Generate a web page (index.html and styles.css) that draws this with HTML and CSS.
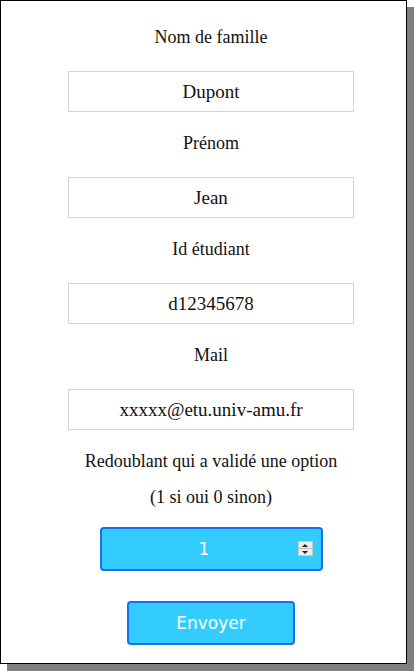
FILE: index.html
```html
<!DOCTYPE html>
<html lang="fr">
<head>
<meta charset="utf-8">
<title>Formulaire</title>
<link rel="stylesheet" href="styles.css">
</head>
<body>
<div class="page">
<div class="card">
  <form class="form">
    <label class="label" for="nom">Nom de famille</label>
    <input class="field" id="nom" type="text" value="Dupont">
    <label class="label" for="prenom">Prénom</label>
    <input class="field" id="prenom" type="text" value="Jean">
    <label class="label" for="id">Id étudiant</label>
    <input class="field" id="id" type="text" value="d12345678">
    <label class="label" for="mail">Mail</label>
    <input class="field" id="mail" type="text" value="xxxxx@etu.univ-amu.fr">
    <p class="label label-tight">Redoublant qui a validé une option</p>
    <p class="label label-sub">(1 si oui 0 sinon)</p>
    <div class="num-wrap">
      <input class="num" type="number" value="1">
      <span class="spin"><span class="spin-half"><span class="tri tri-up"></span></span><span class="spin-half"><span class="tri tri-down"></span></span></span>
    </div>
    <button class="btn" type="button">Envoyer</button>
  </form>
</div>
</div>
</body>
</html>
```
FILE: styles.css
```css
html, body {
  margin: 0;
  padding: 0;
  background: #ffffff;
}

.page {
  width: 414px;
  height: 671px;
  overflow: hidden;
}

.card {
  box-sizing: border-box;
  width: 407px;
  height: 664px;
  border: 1px solid #000000;
  background: #ffffff;
  box-shadow: 7px 7px 0 0 #808080;
}

.form {
  display: flex;
  flex-direction: column;
  align-items: center;
  padding: 25px 0 0 15px;
  margin: 0;
}

.label {
  display: block;
  margin: 0 0 23px;
  font-family: "Liberation Serif", "Times New Roman", serif;
  font-size: 18px;
  line-height: 22px;
  color: #111111;
  text-align: center;
}

.label-tight {
  margin-bottom: 14px;
}

.label-sub {
  margin-bottom: 19px;
}

.field {
  box-sizing: border-box;
  width: 286px;
  height: 41px;
  margin: 0 0 20px;
  padding: 0 4px;
  border: 1px solid #d4d4d4;
  background: #ffffff;
  font-family: "Liberation Serif", "Times New Roman", serif;
  font-size: 19px;
  color: #111111;
  text-align: center;
  outline: none;
}

.num-wrap {
  position: relative;
  width: 223px;
  height: 44px;
  margin: 0 0 30px;
}

.num {
  box-sizing: border-box;
  width: 100%;
  height: 100%;
  margin: 0;
  padding: 0 14px 0 0;
  border: 2px solid #1a6ff0;
  border-radius: 4px;
  background: #33ccff;
  font-family: "DejaVu Sans", Verdana, sans-serif;
  font-size: 17px;
  color: #ffffff;
  text-align: center;
  appearance: textfield;
  -moz-appearance: textfield;
  outline: none;
}

.num::-webkit-inner-spin-button,
.num::-webkit-outer-spin-button {
  -webkit-appearance: none;
  margin: 0;
}

.spin {
  position: absolute;
  right: 10px;
  top: 14px;
  box-sizing: border-box;
  width: 15px;
  height: 15px;
  display: flex;
  flex-direction: column;
  border: 1px solid #c8c8c8;
  background: #ececec;
}

.spin-half {
  flex: 1;
  display: flex;
  align-items: center;
  justify-content: center;
}

.spin-half + .spin-half {
  border-top: 1px solid #c0c0c0;
}

.tri {
  width: 0;
  height: 0;
  border-left: 3px solid transparent;
  border-right: 3px solid transparent;
}

.tri-up {
  border-bottom: 3px solid #222222;
}

.tri-down {
  border-top: 3px solid #222222;
}

.btn {
  box-sizing: border-box;
  width: 168px;
  height: 44px;
  margin: 0;
  padding: 0;
  border: 2px solid #1a6ff0;
  border-radius: 4px;
  background: #33ccff;
  font-family: "DejaVu Sans", Verdana, sans-serif;
  font-size: 17px;
  color: #ffffff;
  cursor: pointer;
}
```
